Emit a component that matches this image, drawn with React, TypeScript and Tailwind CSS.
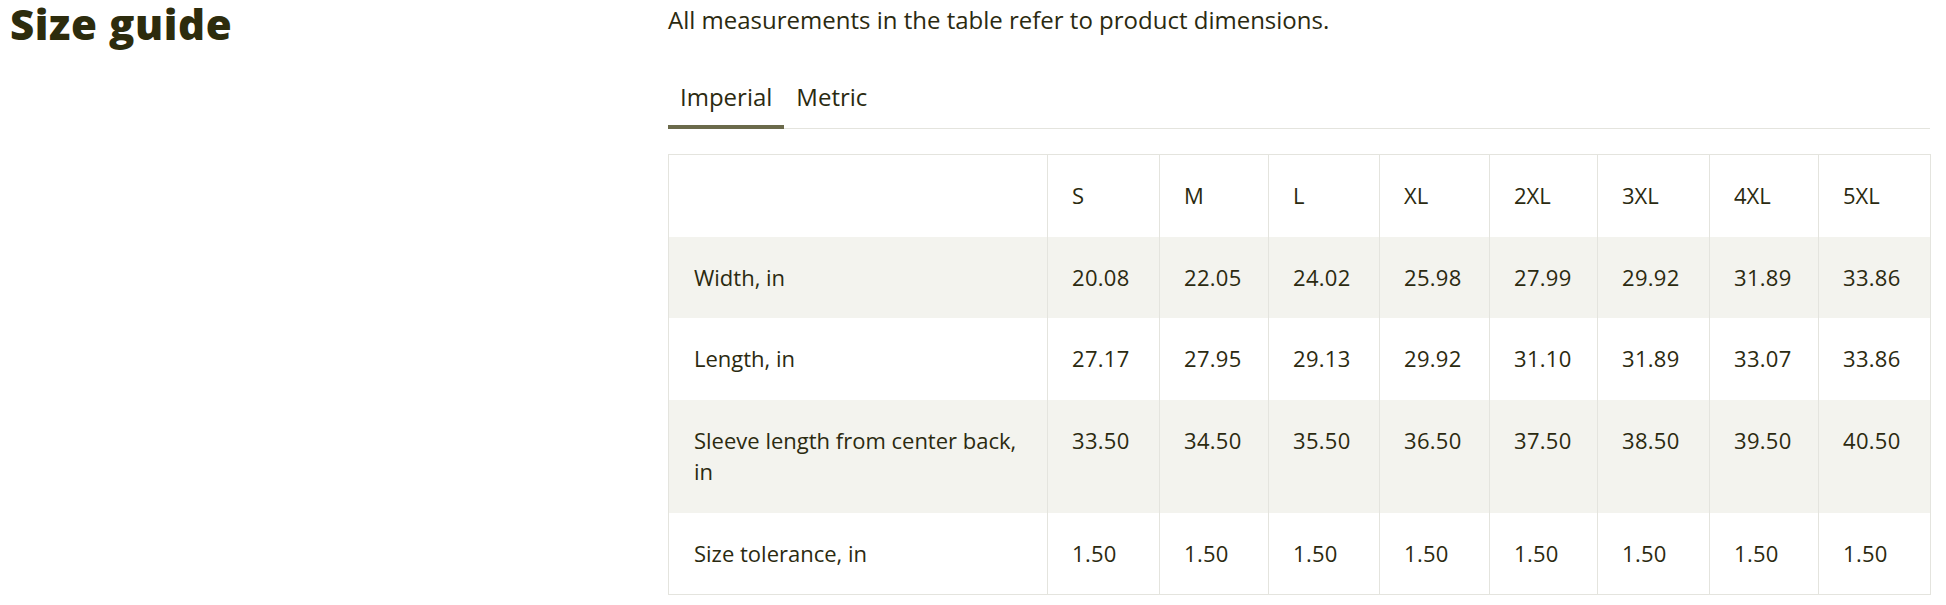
import React from "react";

const sizes = ["S", "M", "L", "XL", "2XL", "3XL", "4XL", "5XL"];
const colWidths = [379, 112, 109, 111, 110, 108, 112, 109, 112];

const rows: { label: string; values: string[]; shaded: boolean }[] = [
  { label: "Width, in", values: ["20.08", "22.05", "24.02", "25.98", "27.99", "29.92", "31.89", "33.86"], shaded: true },
  { label: "Length, in", values: ["27.17", "27.95", "29.13", "29.92", "31.10", "31.89", "33.07", "33.86"], shaded: false },
  { label: "Sleeve length from center back, in", values: ["33.50", "34.50", "35.50", "36.50", "37.50", "38.50", "39.50", "40.50"], shaded: true },
  { label: "Size tolerance, in", values: ["1.50", "1.50", "1.50", "1.50", "1.50", "1.50", "1.50", "1.50"], shaded: false },
];

export default function App() {
  return (
    <div
      className="flex w-full bg-white text-[#2b2a10]"
      style={{ fontFamily: '"Open Sans", "Liberation Sans", sans-serif' }}
    >
      <div className="w-[668px] shrink-0 pl-[10px]">
        <h1 className="text-[42px] font-extrabold leading-[47px] tracking-[0.6px] text-[#2d2c0d]">Size guide</h1>
      </div>
      <div className="w-[1262px] shrink-0">
        <p className="pt-[4px] text-[24px] leading-[32px]">
          All measurements in the table refer to product dimensions.
        </p>
        <div className="mt-[45px] flex border-b border-[#e4e4de]">
          <button className="-mb-px border-b-4 border-[#6b6a4b] px-[12px] pb-[12px] text-[24px] leading-[32px] text-[#2b2a10]">
            Imperial
          </button>
          <button className="-mb-px border-b-4 border-transparent px-[12px] pb-[12px] text-[24px] leading-[32px] text-[#2b2a10]">
            Metric
          </button>
        </div>
        <table className="mt-[25px] w-[1262px] table-fixed border-collapse border border-[#e4e4de] text-[22px] leading-[31.5px]">
          <colgroup>
            {colWidths.map((w, i) => (
              <col key={i} style={{ width: w }} />
            ))}
          </colgroup>
          <thead>
            <tr className="bg-white">
              <th className="px-[25px] py-[25px] text-left font-normal">&nbsp;</th>
              {sizes.map((s) => (
                <th key={s} className="border-l border-[#e4e4de] px-[24px] py-[25px] text-left font-normal">
                  {s}
                </th>
              ))}
            </tr>
          </thead>
          <tbody>
            {rows.map((r) => (
              <tr key={r.label} className={r.shaded ? "bg-[#f3f3ee]" : "bg-white"}>
                <td className="px-[25px] py-[25px] align-top">{r.label}</td>
                {r.values.map((v, i) => (
                  <td key={i} className="border-l border-[#e4e4de] px-[24px] py-[25px] align-top tracking-[0.3px]">
                    {v}
                  </td>
                ))}
              </tr>
            ))}
          </tbody>
        </table>
      </div>
    </div>
  );
}
